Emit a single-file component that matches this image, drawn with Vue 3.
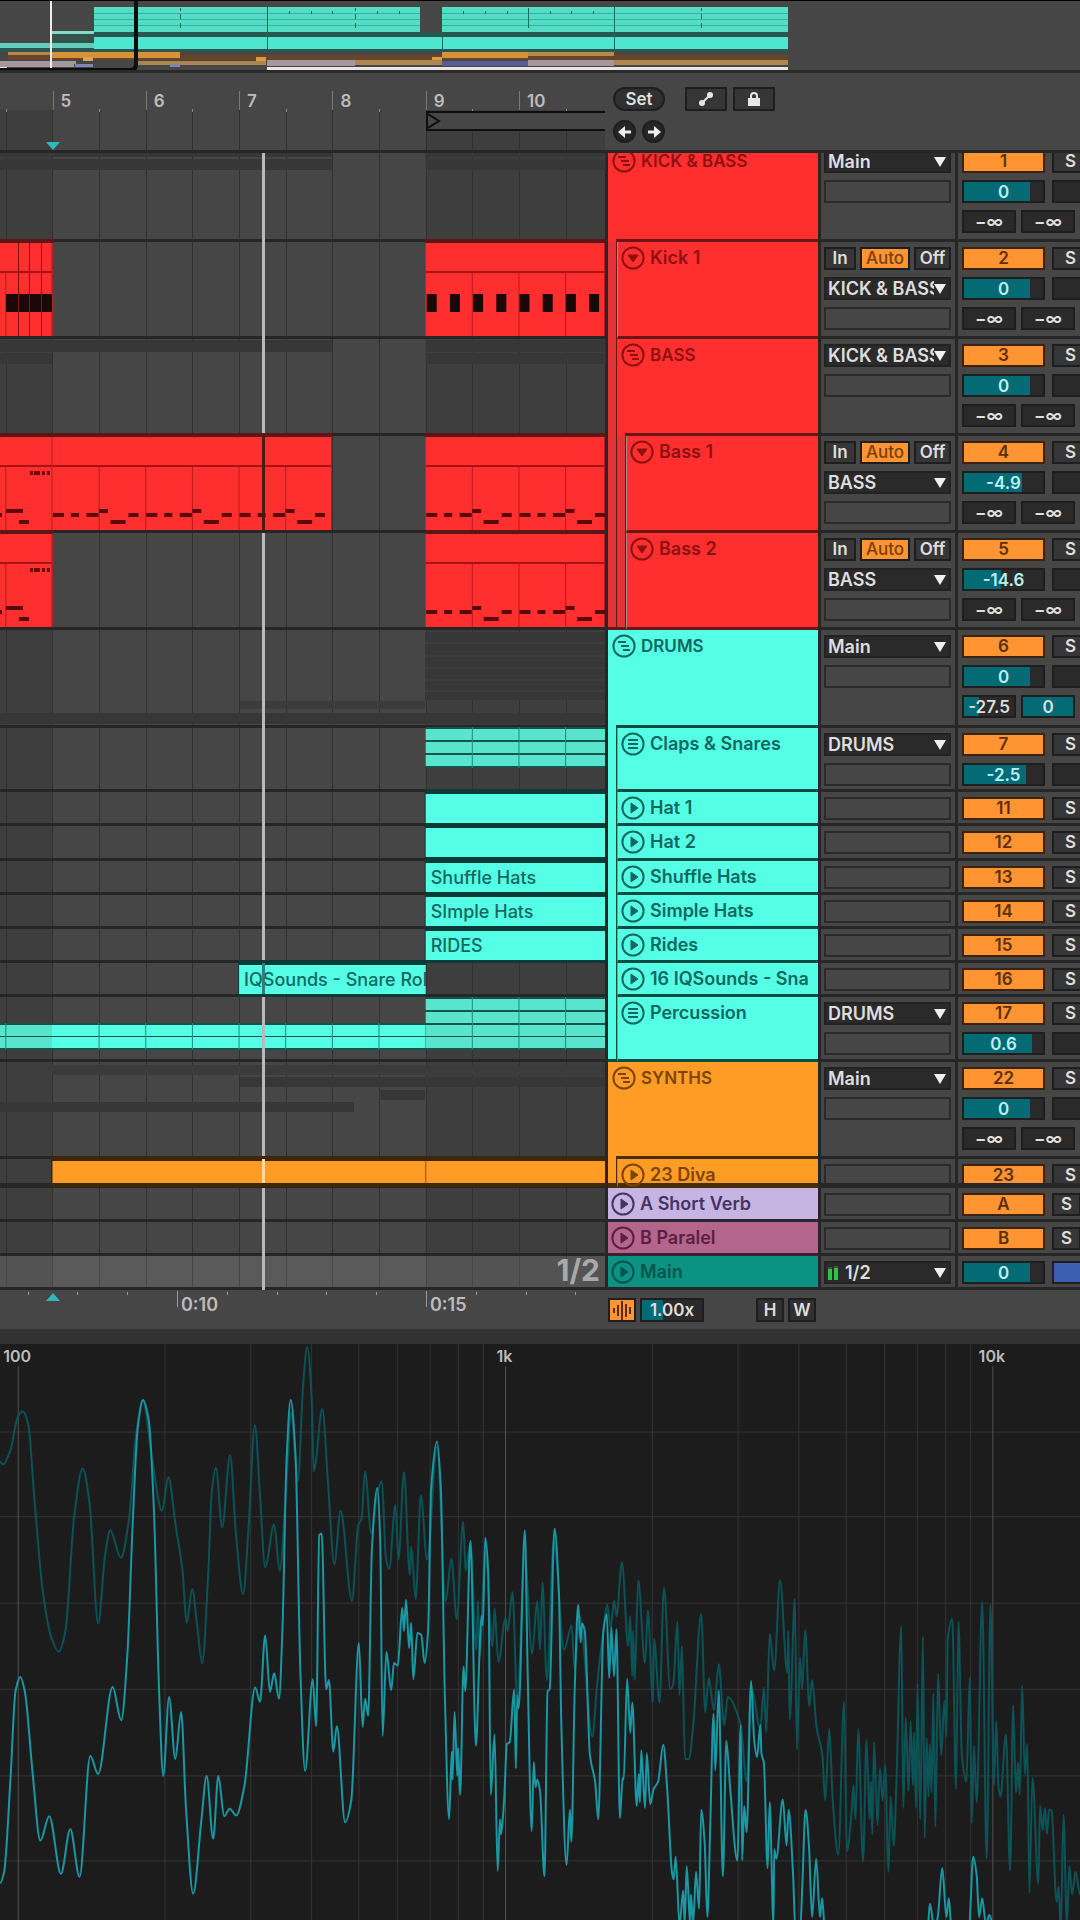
<script setup>
const RED = '#ff2f2f'
const TEAL = '#55ffe6'
const ORANGE = '#ff9c26'
const LANE = 605
const SHADE = '#373737'

// Timeline position in lane units for a given bar number
const barX = (bar) => 52.5 + (bar - 5) * 93.3
const beatLines = Array.from({ length: 13 }, (_, i) => 5.8 + i * 46.65)
const pct = (x) => (x / LANE) * 100 + '%'

const r = (x, y, w, h, fill) => ({ x, y, w, h, fill })
const linesIn = (x0, x1, y, h, fill) =>
  beatLines.filter((b) => b > x0 + 2 && b < x1 - 2).map((b) => r(b - 0.5, y, 1, h, fill))

function redClip(x0, x1) {
  return [
    r(x0 - 1, -3, x1 - x0 + 2, 4, '#5c1616'),
    r(x0, 1, x1 - x0, 93, RED),
    r(x0, 29, x1 - x0, 2, '#a81414'),
    ...linesIn(x0, x1, 31, 63, '#b81c1c'),
    r(x1 - 1, 1, 1, 93, '#b81c1c'),
  ]
}
const bassPattern = [[0.5, 11, 77], [18.5, 8, 77], [34, 12, 77], [46.5, 9, 73], [58, 15, 84], [76, 10, 77]]
function bassNotes(fromBar, toBar, max) {
  const out = []
  for (let b = fromBar; b <= toBar; b++) {
    for (const [dx, w, y] of bassPattern) {
      const x = barX(b) + dx
      if (x < max - 1) out.push(r(x, y, Math.min(w, max - x), 4, '#5a0808'))
    }
  }
  return out
}
const bassTail = [
  r(0, 77, 2, 4, '#5a0808'), r(6, 73, 17, 4, '#5a0808'), r(19, 84, 10, 4, '#5a0808'),
  r(30, 35, 3, 4, '#6a0c0c'), r(34, 35, 6, 4, '#6a0c0c'), r(42, 35, 3, 4, '#6a0c0c'), r(47, 35, 3, 4, '#6a0c0c'),
]
const kickLeft = [
  r(6, 52, 46, 18, '#1c0808'),
  ...[18, 29, 41].flatMap((x) => [r(x, 1, 1, 51, '#7a1010'), r(x, 52, 1, 18, '#8a1616'), r(x, 70, 1, 24, '#7a1010')]),
]
const kickRight = Array.from({ length: 8 }, (_, i) => r(426.7 + i * 23.2, 52, 10, 18, '#1c0808'))

function tealClip(x0, x1) {
  return [r(x0 - 1, -3, x1 - x0 + 1, 37, '#0b3b36'), r(x0, 2, x1 - x0, 29, TEAL)]
}
function tealStack(x0, x1, ys, fill) {
  const top = ys[0] - 2
  const bottom = ys[ys.length - 1] + 13
  return [
    r(x0, top, x1 - x0, bottom - top, '#14544c'),
    ...ys.map((y) => r(x0, y, x1 - x0, 11, fill)),
    ...linesIn(x0, x1, top, bottom - top, '#1f8a7c'),
  ]
}
const drumShade = [
  r(425, 2, 180, 68, SHADE), ...[12, 25, 37, 49, 60].map((y) => r(425, y, 180, 2, '#3c3c3c')),
  r(240, 71, 185, 8, '#3b3b3b'), r(0, 83, 605, 11, SHADE),
]
const X9 = barX(9)

const tracks = [
  { name: 'KICK & BASS', n: 1, h: 97, c: 'red', icon: 'group', own: true, strips: [], out: 'Main', vol: '0', fill: 83, meters: true,
    rects: [r(0, 1, 332, 11, SHADE), r(0, 14, 332, 11, SHADE), r(X9, 1, 180, 11, SHADE), r(X9, 14, 180, 11, SHADE)] },
  { name: 'Kick 1', n: 2, h: 97, c: 'red', icon: 'fold', strips: ['red'], monitor: true, out: 'KICK & BASS', vol: '0', fill: 83, meters: true,
    rects: [...redClip(0, 52.5), ...kickLeft, ...redClip(X9, LANE), ...kickRight] },
  { name: 'BASS', n: 3, h: 97, c: 'red', icon: 'group', own: true, strips: ['red'], out: 'KICK & BASS', vol: '0', fill: 83, meters: true,
    rects: [r(0, 1, 332, 12, SHADE), r(0, 14, 52, 11, SHADE), r(X9, 1, 180, 12, SHADE), r(X9, 14, 180, 11, SHADE)] },
  { name: 'Bass 1', n: 4, h: 97, c: 'red', icon: 'fold', strips: ['red', 'red'], monitor: true, out: 'BASS', vol: '-4.9', fill: 73, meters: true, head: '#4a1a1a',
    rects: [...redClip(0, 52.5), ...bassTail, ...redClip(52.5, 332), ...bassNotes(5, 7, 332), ...redClip(X9, LANE), ...bassNotes(9, 10, LANE)] },
  { name: 'Bass 2', n: 5, h: 97, c: 'red', icon: 'fold', strips: ['red', 'red'], last: true, monitor: true, out: 'BASS', vol: '-14.6', fill: 47, meters: true,
    rects: [...redClip(0, 52.5), ...bassTail, ...redClip(X9, LANE), ...bassNotes(9, 10, LANE)] },
  { name: 'DRUMS', n: 6, h: 98, c: 'teal', icon: 'group', own: true, strips: [], out: 'Main', vol: '0', fill: 83, meters: true, live: true, rects: drumShade },
  { name: 'Claps & Snares', n: 7, h: 64, c: 'teal', icon: 'list', strips: ['teal'], out: 'DRUMS', vol: '-2.5', fill: 78,
    rects: tealStack(X9, LANE, [1, 14, 27], '#58e4cd') },
  { name: 'Hat 1', n: 11, h: 34, c: 'teal', icon: 'play', strips: ['teal'], rects: tealClip(X9, LANE) },
  { name: 'Hat 2', n: 12, h: 35, c: 'teal', icon: 'play', strips: ['teal'], rects: tealClip(X9, LANE) },
  { name: 'Shuffle Hats', n: 13, h: 34, c: 'teal', icon: 'play', strips: ['teal'], rects: tealClip(X9, LANE), clip: 'Shuffle Hats', x0: X9, x1: LANE },
  { name: 'Simple Hats', n: 14, h: 34, c: 'teal', icon: 'play', strips: ['teal'], rects: tealClip(X9, LANE), clip: 'SImple Hats', x0: X9, x1: LANE },
  { name: 'Rides', n: 15, h: 34, c: 'teal', icon: 'play', strips: ['teal'], rects: tealClip(X9, LANE), clip: 'RIDES', x0: X9, x1: LANE },
  { name: '16 IQSounds - Sna', n: 16, h: 34, c: 'teal', icon: 'play', strips: ['teal'], rects: tealClip(barX(7), X9), clip: 'IQSounds - Snare Roll', x0: barX(7), x1: X9, head: '#2f7f76' },
  { name: 'Percussion', n: 17, h: 65, c: 'teal', icon: 'list', strips: ['teal'], last: true, out: 'DRUMS', vol: '0.6', fill: 86,
    rects: [...tealStack(0, 52, [28, 40], '#58e4cd'), ...tealStack(52, X9, [28, 40], TEAL), ...tealStack(X9, LANE, [2, 15, 28, 40], '#58e4cd')] },
  { name: 'SYNTHS', n: 22, h: 97, c: 'orange', icon: 'group', own: true, strips: [], out: 'Main', vol: '0', fill: 83, meters: true,
    rects: [r(52, 3, 553, 10, '#3b3b3b'), r(240, 15, 365, 10, SHADE), r(379, 28, 46, 10, SHADE), r(0, 40, 354, 10, SHADE)] },
  { name: '23 Diva', n: 23, h: 29, c: 'orange', icon: 'play', strips: ['orange'], last: true, cut: true, head: '#ffd9a0',
    rects: [r(51, -3, 554, 31, '#3d270b'), r(52.5, 2, 552.5, 22, ORANGE), r(X9 - 0.5, 2, 1, 22, '#8a5412')] },
]
const returns = [
  { name: 'A Short Verb', n: 'A', h: 34, c: 'lilac', icon: 'play', strips: [], rects: [], narrow: true },
  { name: 'B Paralel', n: 'B', h: 34, c: 'pink', icon: 'play', strips: [], rects: [], narrow: true },
  { name: 'Main', h: 34, c: 'green', icon: 'play', strips: [], main: true, out: '1/2', vol: '0', fill: 83,
    rects: [r(0, 0, 605, 31, 'rgba(255,255,255,0.11)')] },
]
const rows = [...tracks, ...returns]

const field = (fill) => ({ background: `linear-gradient(90deg, #046a74 ${fill}%, #2a2a2a ${fill}%)` })

const bars = [5, 6, 7, 8, 9, 10]
const halfTicks = beatLines.filter((_, i) => i % 2 === 0)
const seconds = Array.from({ length: 12 }, (_, i) => ({ x: 27.6 + i * 49.8, label: { 3: '0:10', 8: '0:15' }[i] }))

const t1 = '#55dcc6'
const overview = [
  r(94, 32, 694, 5, '#26584f'), r(51, 34, 43, 9, '#33524c'), r(0, 48, 788, 4, '#2c564f'),
  r(94, 7, 326, 25, t1), r(442, 7, 346, 25, t1), r(51, 31, 43, 3, '#86d8c8'), r(0, 43, 94, 5, '#62ceba'), r(94, 37, 694, 12, '#4fe6d0'),
  ...[13, 19, 25].flatMap((y) => [r(94, y, 326, 1, '#35b3a1'), r(442, y, 346, 1, '#35b3a1')]),
  ...[180, 355, 701].flatMap((x) => [r(x, 8, 1, 3, '#1b6a60'), r(x, 14, 1, 5, '#1b6a60'), r(x, 23, 1, 5, '#1b6a60')]),
  ...[267, 614].map((x) => r(x, 7, 1, 43, '#1b6a60')), r(528, 8, 1, 20, '#1b6a60'), r(442, 37, 1, 12, '#1b6a60'),
  ...[289, 311, 332, 377, 399, 463, 485, 507, 550, 571, 593].map((x) => r(x, 11, 1, 3, '#1b6a60')),
  r(8, 55, 780, 5, '#66452a'), r(8, 52, 172, 3, '#b9894c'), r(51, 52, 129, 6, '#d79237'), r(83, 57, 10, 4, '#dba35a'),
  r(256, 57, 10, 5, '#e09a3c'), r(432, 57, 10, 5, '#e09a3c'), r(442, 52, 86, 6, '#d79237'), r(528, 52, 86, 4, '#b9894c'),
  r(0, 61, 76, 3, '#a5979e'), r(0, 64, 74, 3, '#a5979e'), r(75, 64, 18, 3, '#8284b4'), r(138, 61, 128, 4, '#ac8650'), r(170, 64, 10, 3, '#8284b4'),
  r(267, 60, 88, 6, '#a5979e'), r(355, 60, 87, 5, '#ac8650'), r(442, 61, 86, 5, '#555c98'), r(528, 60, 86, 6, '#a5979e'), r(614, 60, 174, 5, '#ac8650'),
  r(0, 67, 7, 3, '#e8e4e4'), r(267, 67, 521, 3, '#e8e4e4'),
]

// Spectrum: frequency decades on x, level on y, in plot units
const decade = 1415
const freqLines = []
for (let d = 0; d < 3; d++) {
  for (let n = 1; n < 10; n++) freqLines.push({ x: 53 + (d + Math.log10(n)) * decade, major: n === 1 })
}
const levelLines = [271, 496, 726, 955, 1185, 1411]

// Monotone cubic curve through the sampled points
function curve(flat) {
  const p = []
  for (let i = 0; i < flat.length; i += 2) p.push([flat[i], flat[i + 1]])
  const s = p.slice(1).map((q, i) => (q[1] - p[i][1]) / (q[0] - p[i][0]))
  const m = p.map((_, i) => {
    if (i === 0 || i === p.length - 1) return 0
    return s[i - 1] * s[i] <= 0 ? 0 : (2 * s[i - 1] * s[i]) / (s[i - 1] + s[i])
  })
  let d = `M${p[0][0]},${p[0][1]}`
  for (let i = 0; i < p.length - 1; i++) {
    const k = (p[i + 1][0] - p[i][0]) / 3
    d += `C${p[i][0] + k},${p[i][1] + m[i] * k} ${p[i + 1][0] - k},${p[i + 1][1] - m[i + 1] * k} ${p[i + 1][0]},${p[i + 1][1]}`
  }
  return d
}
const upper = (a) => a.map((v, i) => (i % 2 ? v : v + 1568))

const liveCurve = curve([
  0, 1470, 12, 1440, 30, 1200, 45, 960, 59, 922, 72, 960, 95, 1180, 117, 1357, 143, 1292, 177, 1445, 204, 1327, 231, 1453, 262, 1132, 285, 1180,
  327, 949, 352, 1037, 370, 860, 385, 520, 400, 260, 415, 186, 432, 240, 447, 480, 462, 960, 474, 1185, 491, 975, 509, 1140, 526, 1015, 540, 1270,
  561, 1498, 585, 1300, 600, 1185, 619, 1352, 634, 1185, 651, 1292, 667, 1272, 686, 1290, 710, 1210, 741, 950, 755, 988, 770, 812, 784, 962,
  796, 912, 810, 980, 820, 800, 832, 350, 844, 186, 858, 330, 872, 900, 886, 1172, 908, 928, 918, 1053, 927, 545, 934, 541, 947, 955, 955, 930,
  968, 1120, 978, 1053, 1002, 1308, 1020, 1250, 1042, 832, 1053, 1055, 1060, 980, 1069, 1025, 1080, 580, 1096, 420, 1104, 560, 1111, 1078,
  1122, 855, 1136, 957, 1144, 885, 1155, 892, 1168, 738, 1173, 800, 1179, 717, 1188, 845, 1194, 778, 1200, 928, 1212, 805, 1223, 810, 1233, 885,
  1243, 800, 1252, 420, 1269, 296, 1280, 420, 1292, 980, 1304, 1300, 1312, 1120, 1314, 1195, 1320, 1015, 1328, 1185, 1330, 1110, 1336, 1235,
  1346, 895, 1351, 960, 1366, 560, 1382, 1105, 1392, 870, 1398, 760, 1402, 785, 1409, 552, 1418, 650, 1425, 1235, 1436, 1075, 1445, 1437,
  1452, 1300, 1455, 1340, 1464, 1245, 1472, 1100, 1480, 1095, 1493, 955, 1498, 1165, 1502, 970, 1506, 1005, 1524, 532, 1532, 900, 1544, 1332,
  1550, 1148, 1555, 1215, 1560, 1195,
  ...upper([
    0, 1225, 13, 1452, 22, 960, 28, 955, 42, 528, 55, 700, 62, 1050, 77, 1422, 87, 1275, 91, 1360, 101, 950, 111, 730, 118, 830, 122, 780, 130, 800,
    145, 1130, 160, 1200, 169, 1300, 184, 800, 194, 755, 201, 925, 207, 790, 215, 920, 222, 795, 232, 1297, 240, 1190, 243, 1195, 253, 927,
    262, 1070, 268, 990, 281, 1265, 287, 1180, 290, 1255, 294, 1117, 305, 1270, 310, 1125, 320, 1260, 330, 1220, 343, 1200, 358, 1102, 370, 1230,
    383, 1440, 388, 1460, 394, 1400, 405, 1580, 416, 1490, 420, 1580, 426, 1425, 436, 1580, 438, 1500, 445, 1575, 453, 1440, 462, 1538, 468, 1275,
    478, 1360, 486, 1560, 494, 1330, 504, 1020, 509, 1170, 519, 957, 531, 1452, 541, 1092, 552, 1215, 573, 1410, 583, 1050, 587, 1410, 593, 1265,
    600, 1335, 613, 933, 622, 1090, 630, 1135, 640, 1050, 643, 1125, 650, 1150, 661, 1430, 667, 1255, 678, 1580, 680, 1380, 686, 1405, 705, 1248,
    716, 1370, 722, 1275, 735, 1450, 742, 1600, 755, 1600, 762, 1470, 771, 1275, 781, 1370, 790, 1560, 802, 1405, 813, 1560, 819, 1510, 828, 1600,
    1125, 1600, 1132, 1525, 1145, 1590, 1155, 1560, 1168, 1430, 1180, 1560, 1187, 1510, 1195, 1590, 1245, 1600, 1258, 1400, 1268, 1450, 1275, 1560,
    1284, 1510, 1295, 1580, 1305, 1555, 1320, 1600,
  ]),
])
const peakCurve = curve([
  0, 350, 9, 357, 30, 320, 52, 230, 66, 216, 82, 250, 100, 450, 125, 700, 150, 820, 171, 855, 190, 800, 215, 500, 240, 368, 260, 460, 285, 780,
  305, 600, 320, 532, 351, 605, 375, 500, 395, 280, 415, 190, 440, 330, 470, 480, 489, 392, 510, 520, 530, 640, 542, 778, 558, 688, 573, 790,
  587, 885, 605, 640, 615, 430, 627, 366, 645, 524, 668, 333, 685, 540, 706, 702, 722, 520, 740, 252, 755, 440, 770, 630, 796, 516, 812, 640,
  832, 400, 845, 220, 865, 400, 880, 150, 892, 45, 905, 180, 911, 375, 936, 210, 952, 400, 971, 622, 989, 480, 1022, 720, 1040, 520, 1050, 500,
  1060, 376, 1078, 540, 1096, 430, 1109, 402, 1120, 600, 1130, 635, 1148, 465, 1157, 610, 1173, 378, 1190, 650, 1194, 575, 1207, 715, 1222, 440,
  1240, 610, 1269, 310, 1294, 720, 1311, 608, 1326, 768, 1345, 510, 1352, 640, 1366, 565, 1383, 850, 1388, 720, 1392, 870, 1409, 590, 1430, 840,
  1436, 740, 1447, 882, 1468, 765, 1474, 800, 1488, 697, 1502, 980, 1524, 600, 1545, 860, 1560, 720,
  ...upper([
    0, 850, 7, 670, 20, 930, 40, 560, 70, 850, 92, 785, 100, 900, 115, 760, 152, 1080, 165, 950, 184, 800, 195, 730, 205, 790, 215, 720, 222, 760,
    238, 618, 256, 840, 262, 760, 268, 920, 270, 800, 275, 930, 285, 665, 305, 885, 313, 745, 328, 990, 331, 820, 347, 990, 360, 685, 378, 955,
    387, 940, 399, 775, 405, 970, 412, 840, 421, 1140, 432, 1140, 445, 1050, 468, 755, 480, 1015, 490, 925, 505, 1010, 519, 888, 535, 1050,
    545, 975, 583, 1050, 600, 1200, 613, 950, 640, 1060, 650, 950, 657, 1070, 667, 808, 680, 905, 697, 665, 718, 910, 721, 800, 725, 1035,
    740, 715, 746, 1115, 755, 870, 761, 955, 770, 797, 782, 1000, 790, 930, 803, 1055, 820, 1130, 828, 1250, 840, 1060, 850, 1250, 866, 1395,
    883, 988, 891, 1385, 905, 1280, 910, 1210, 916, 1300, 924, 1060, 938, 1412, 948, 1090, 957, 1300, 961, 1200, 965, 1340, 970, 1095, 980, 1315,
    987, 1165, 995, 1250, 1002, 1155, 1012, 1440, 1018, 1240, 1027, 1370, 1035, 1200, 1049, 788, 1055, 1270, 1062, 1030, 1070, 1225, 1076, 1040,
    1083, 1210, 1086, 1070, 1092, 1270, 1096, 940, 1104, 1300, 1112, 815, 1117, 1350, 1123, 1085, 1128, 1240, 1132, 1100, 1137, 1230, 1142, 965,
    1148, 1320, 1156, 912, 1165, 1130, 1174, 985, 1180, 1080, 1184, 820, 1197, 768, 1208, 1220, 1215, 775, 1225, 1130, 1238, 1200, 1248, 925,
    1254, 1310, 1260, 1105, 1268, 1255, 1284, 722, 1297, 1405, 1308, 730, 1318, 1210, 1325, 1040, 1331, 1210, 1337, 1240, 1353, 1075, 1365, 1437,
    1374, 997, 1382, 1230, 1388, 1150, 1393, 1235, 1400, 945, 1408, 1180, 1415, 1100, 1421, 1495, 1430, 1190, 1447, 1472, 1452, 1265, 1460, 1330,
    1466, 1270, 1472, 1340, 1478, 1275, 1485, 1275, 1500, 1520, 1506, 1480, 1512, 1600, 1520, 1288, 1530, 1580, 1537, 1425, 1545, 1500,
    1555, 1440, 1568, 1500,
  ]),
])
</script>

<template>
  <main class="app">
    <svg class="overview" viewBox="0 0 1080 70" preserveAspectRatio="none" role="img" aria-label="Arrangement overview">
      <rect v-for="(s, i) in overview" :key="i" :x="s.x" :y="s.y" :width="s.w" :height="s.h" :fill="s.fill" />
      <rect x="50" y="1" width="2" height="69" fill="#ececec" />
      <path d="M0 70H130Q136 70 136 64V0" fill="none" stroke="#0c0c0c" stroke-width="4" />
      <rect x="0" y="0" width="1080" height="1" fill="#000" />
    </svg>

    <header class="top">
      <div class="ruler">
        <span class="dim before"></span><span class="dim after"></span>
        <span v-for="(x, i) in beatLines" :key="'l' + i" class="beat" :style="{ left: pct(x) }"></span>
        <span v-for="(x, i) in halfTicks" :key="'h' + i" class="half" :style="{ left: pct(x) }"></span>
        <span v-for="b in bars" :key="b" class="bar" :style="{ left: pct(barX(b)) }">{{ b }}</span>
        <span class="loop"><svg width="16" height="16" viewBox="0 0 16 16"><path d="M0 1L11 8L0 15" fill="none" stroke="#0e0e0e" stroke-width="2" /></svg></span>
        <svg class="marker" width="14" height="8" viewBox="0 0 14 8"><path d="M0 0H14L7 8Z" fill="#2fb9bd" /></svg>
      </div>
      <div class="tools">
        <div class="tool-row">
          <button class="pill">Set</button>
          <button class="square first" aria-label="Automation mode">
            <svg width="16" height="16" viewBox="0 0 16 16"><path d="M4 12L12 4" stroke="#e6e6e6" stroke-width="2" /><circle cx="4" cy="12" r="3" fill="#e6e6e6" /><circle cx="12" cy="4" r="3" fill="#e6e6e6" /></svg>
          </button>
          <button class="square" aria-label="Lock envelopes">
            <svg width="16" height="16" viewBox="0 0 16 16"><rect x="2" y="7" width="12" height="8" fill="#e6e6e6" /><path d="M5 8V5a3 3 0 0 1 6 0V8" fill="none" stroke="#e6e6e6" stroke-width="2" /></svg>
          </button>
        </div>
        <div class="tool-row arrows">
          <button class="round" aria-label="Previous locator">
            <svg width="16" height="16" viewBox="0 0 16 16"><path d="M14 8H5" stroke="#eee" stroke-width="3" /><path d="M1 8L8 2V14Z" fill="#eee" /></svg>
          </button>
          <button class="round" aria-label="Next locator">
            <svg width="16" height="16" viewBox="0 0 16 16"><path d="M2 8H11" stroke="#eee" stroke-width="3" /><path d="M15 8L8 2V14Z" fill="#eee" /></svg>
          </button>
        </div>
      </div>
    </header>

    <section class="tracks">
      <div class="grid">
        <span class="dim before"></span><span class="dim after"></span>
        <span v-for="(x, i) in beatLines" :key="i" class="beat" :style="{ left: pct(x) }"></span>
      </div>
      <div v-for="t in rows" :key="t.name" class="track" :class="[t.c, { cut: t.cut }]" :style="{ height: t.h + 'px' }">
        <div class="lane">
          <svg :viewBox="`0 0 605 ${t.h - 3}`" :style="{ height: t.h - 3 + 'px' }" preserveAspectRatio="none">
            <rect v-for="(s, i) in t.rects" :key="i" :x="s.x" :y="s.y" :width="s.w" :height="s.h" :fill="s.fill" />
          </svg>
          <span v-if="t.clip" class="clip-name" :style="{ left: pct(t.x0), width: pct(t.x1 - t.x0) }">{{ t.clip }}</span>
          <span v-if="t.main" class="signature">1/2</span>
          <span class="playhead" :class="{ over: t.head }" :style="{ background: t.head }"></span>
        </div>

        <div class="head">
          <span v-for="(s, i) in t.strips" :key="i" class="strip" :class="[s, { dimmed: s === 'red', end: t.last }]"></span>
          <span v-if="t.own" class="strip own"></span>
          <div class="title" :class="{ own: t.own, nested: t.strips.length }">
            <svg class="icon" width="24" height="24" viewBox="0 0 24 24" fill="none" stroke="currentColor" stroke-width="2">
              <circle cx="12" cy="12" r="10.6" />
              <path v-if="t.icon === 'group'" d="M6 8H14M9 12H17M11 16H18" />
              <path v-else-if="t.icon === 'list'" d="M7 8H17M7 12H17M7 16H17" />
              <path v-else-if="t.icon === 'play'" d="M10 7V17L17 12Z" fill="currentColor" stroke-width="1" />
              <path v-else d="M7 9H17L12 16Z" fill="currentColor" stroke-width="1" />
            </svg>
            <span class="name">{{ t.name }}</span>
          </div>
        </div>

        <div class="io">
          <div v-if="t.monitor" class="monitor">
            <button class="in">In</button><button class="auto">Auto</button><button class="off">Off</button>
          </div>
          <label v-if="t.out" class="pick">
            <svg v-if="t.main" class="levels" width="11" height="14" viewBox="0 0 11 14"><path d="M0 3H4V14H0ZM6 1H10V14H6Z" fill="#2ec24a" /><path d="M0 1H4V3H0ZM6 0H10V2H6Z" fill="#3b5a20" /></svg>
            <select :aria-label="t.name + ' output'"><option>{{ t.out }}</option></select>
            <svg class="caret" width="12" height="10" viewBox="0 0 12 10"><path d="M0 0H12L6 10Z" fill="#f0f0f0" /></svg>
          </label>
          <span v-if="!t.main" class="slot"></span>
        </div>

        <div class="mixer">
          <div v-if="t.n" class="mix-row">
            <button class="active">{{ t.n }}</button>
            <button class="solo" :class="{ narrow: t.narrow }">S</button>
          </div>
          <div v-if="t.vol" class="mix-row">
            <input class="volume" :value="t.vol" :style="field(t.fill)" :aria-label="t.name + ' volume'" />
            <span class="pan" :class="{ cue: t.main }"></span>
          </div>
          <div v-if="t.meters" class="mix-row sends">
            <input :value="t.live ? '-27.5' : '−∞'" :style="field(t.live ? 30 : 0)" :aria-label="t.name + ' send A'" />
            <input :value="t.live ? '0' : '−∞'" :style="field(t.live ? 100 : 0)" :aria-label="t.name + ' send B'" />
          </div>
        </div>
      </div>
    </section>

    <footer class="status">
      <div class="clock">
        <span v-for="(s, i) in seconds" :key="i" class="sec" :class="{ big: s.label }" :style="{ left: pct(s.x) }">{{ s.label }}</span>
        <svg class="marker" width="14" height="8" viewBox="0 0 14 8"><path d="M0 8H14L7 0Z" fill="#2fb9bd" /></svg>
      </div>
      <div class="zoom">
        <button class="wave" aria-label="Scrub audio">
          <svg width="21" height="19" viewBox="0 0 21 19"><path d="M2 7V12M6 4V15M10 0V19M14 3V16M18 6V13" stroke="#5c2f0c" stroke-width="2" /></svg>
        </button>
        <input class="speed" value="1.00x" aria-label="Speed" />
        <button class="fit h">H</button><button class="fit">W</button>
      </div>
    </footer>

    <section class="spectrum">
      <svg viewBox="0 37 3136 1531" preserveAspectRatio="none" role="img" aria-label="Spectrum analyser">
        <g fill="none">
          <path v-for="(y, i) in levelLines" :key="'y' + i" class="line" :d="`M0 ${y}H3136`" />
          <path v-for="(l, i) in freqLines" :key="'x' + i" class="line" :class="{ major: l.major }" :d="`M${l.x} ${l.major ? 96 : 37}V1568`" />
          <path class="peak" :d="peakCurve" />
          <path class="live" :d="liveCurve" />
        </g>
      </svg>
      <span v-for="(f, i) in ['100', '1k', '10k']" :key="f" class="freq" :style="{ left: ((50 + i * decade) / 3136) * 100 + '%' }">{{ f }}</span>
    </section>
  </main>
</template>

<style>
body {
  margin: 0;
  background: #464646;
}
</style>

<style scoped>
.app {
  --side: 475px;
  --line: #262626;
  display: flex;
  flex-direction: column;
  min-height: 100vh;
  overflow: hidden;
  background: #464646;
  color: #dedede;
  font-family: Inter, "Liberation Sans", sans-serif;
  font-size: 17px;
  font-weight: 600;
  line-height: 20px;
}
.app * {
  box-sizing: border-box;
}
button,
input,
select {
  margin: 0;
  padding: 0;
  border: 2px solid #1e1e1e;
  border-radius: 0;
  background: #363636;
  color: #dedede;
  font: inherit;
  text-align: center;
}
svg {
  display: block;
}
.overview {
  width: 100%;
  height: 70px;
  flex: none;
  overflow: visible;
}

.top {
  display: flex;
  height: 83px;
  border-top: 3px solid #2a2a2a;
  border-bottom: 3px solid var(--line);
}
.ruler {
  position: relative;
  flex: 1;
  min-width: 0;
  overflow: hidden;
}
.ruler .dim,
.ruler .beat {
  top: 37px;
}
.dim {
  position: absolute;
  top: 0;
  bottom: 0;
  background: #3e3e3e;
}
.dim.before {
  left: 0;
  width: 8.68%;
}
.dim.after {
  left: 70.35%;
  right: 0;
}
.beat {
  position: absolute;
  top: 0;
  bottom: 0;
  width: 1px;
  background: #303030;
}
.half {
  position: absolute;
  top: 36px;
  width: 1px;
  height: 3px;
  background: #8a8a8a;
}
.bar {
  position: absolute;
  top: 18px;
  height: 19px;
  padding-left: 7px;
  border-left: 1px solid #7a7a7a;
  color: #bdbdbd;
}
.loop {
  position: absolute;
  left: 70.35%;
  right: 0;
  top: 38px;
  height: 20px;
  border: 2px solid #0e0e0e;
  border-right: 0;
  background: #464646;
}
.marker {
  position: absolute;
  left: 8.76%;
  margin-left: -7px;
}
.ruler .marker {
  bottom: 0;
}
.tools {
  width: var(--side);
  padding: 14px 0 0 8px;
}
.tool-row {
  display: flex;
  gap: 6px;
}
.tool-row.arrows {
  margin-top: 9px;
}
.pill {
  width: 52px;
  height: 24px;
  border-radius: 12px;
  background: #303030;
}
.square,
.round {
  display: grid;
  place-items: center;
  width: 42px;
  height: 24px;
}
.square.first {
  margin-left: 14px;
}
.round {
  width: 23px;
  height: 23px;
  border-radius: 50%;
  background: #262626;
}

.tracks {
  position: relative;
  overflow: hidden;
}
.grid {
  position: absolute;
  top: 0;
  bottom: 0;
  left: 0;
  right: var(--side);
}
.track {
  position: relative;
  display: flex;
}
.track:nth-child(2) {
  margin-top: -8px;
}
.lane {
  position: relative;
  flex: 1;
  min-width: 0;
  border-bottom: 3px solid var(--line);
}
.lane svg {
  width: 100%;
  overflow: visible;
}
.clip-name {
  position: absolute;
  top: 0;
  height: 31px;
  padding-left: 5px;
  overflow: hidden;
  color: #12685e;
  font-size: 18px;
  font-weight: 500;
  line-height: 33px;
  white-space: nowrap;
}
.signature {
  position: absolute;
  right: 5px;
  top: 0;
  color: #a9a9a9;
  font-size: 30px;
  font-weight: 700;
  line-height: 29px;
}
.playhead {
  position: absolute;
  top: 0;
  bottom: -3px;
  left: 43.3%;
  width: 3px;
  background: #b9b9b9;
}
.playhead.over {
  bottom: 0;
}

.head {
  display: flex;
  width: 216px;
  border-left: 3px solid var(--line);
  border-right: 3px solid var(--line);
}
.red {
  --fill: #ff2f2f;
  --ink: #8e1010;
  --edge: #6a1616;
}
.teal {
  --fill: #55ffe6;
  --ink: #12685e;
  --edge: #0b4b44;
}
.orange {
  --fill: #ff9c26;
  --ink: #7c4508;
  --edge: #4a2d08;
}
.lilac {
  --fill: #c6b4e2;
  --ink: #453463;
  --edge: #2c2535;
}
.pink {
  --fill: #b4658c;
  --ink: #5a1f42;
  --edge: #3a2230;
}
.green {
  --fill: #0b9282;
  --ink: #05554c;
  --edge: #262626;
}
.strip {
  width: 9px;
  border-right: 1px solid var(--edge);
  background: var(--fill);
}
.strip.dimmed {
  background: #e23434;
}
.strip.own {
  width: 8px;
  border-right: 0;
}
.strip.end {
  border-bottom: 3px solid var(--edge);
}
.title {
  display: flex;
  flex: 1;
  min-width: 0;
  gap: 5px;
  padding: 4px 0 0 3px;
  border-bottom: 3px solid var(--edge);
  background: var(--fill);
  color: var(--ink);
}
.title.nested {
  border-left: 1px solid #9a8f8c;
}
.title.own {
  padding-left: 0;
  font-size: 17px;
}
.title.own .icon {
  margin-left: -4px;
}
.title.own.nested {
  border-left: 0;
}
.icon {
  flex: none;
}
.name {
  overflow: hidden;
  font-size: 18px;
  line-height: 24px;
  white-space: nowrap;
}
.own .name {
  font-size: 17px;
}

.io,
.mixer {
  display: flex;
  flex-direction: column;
  gap: 7px;
  overflow: hidden;
  border-bottom: 3px solid var(--line);
}
.io {
  width: 137px;
  padding: 5px 4px 0 3px;
  border-right: 3px solid var(--line);
}
.mixer {
  width: 122px;
  padding: 5px 0 0 4px;
}
.cut .title,
.cut .lane,
.cut .io,
.cut .mixer,
.cut .strip {
  border-bottom-width: 5px;
}
.monitor {
  display: flex;
  flex: none;
  gap: 4px;
}
.monitor button {
  height: 23px;
  line-height: 19px;
}
.in {
  width: 32px;
}
.monitor .auto {
  width: 50px;
  background: #ff9433;
  color: #7a3f08;
  font-weight: 500;
}
.off {
  width: 37px;
}
.pick {
  display: flex;
  flex: none;
  align-items: center;
  height: 23px;
  padding-right: 3px;
  background: #2a2a2a;
  border: 2px solid #222;
}
.pick select {
  flex: 1;
  min-width: 0;
  height: 19px;
  padding-left: 2px;
  border: 0;
  background: none;
  appearance: none;
  font-size: 18px;
  line-height: 19px;
  text-align: left;
  overflow: hidden;
  text-overflow: clip;
}
.levels {
  flex: none;
  margin: 0 4px 0 2px;
}
.caret {
  flex: none;
}
.slot {
  flex: none;
  height: 23px;
  border: 2px solid #2a2a2a;
}
.mix-row {
  display: flex;
  flex: none;
  gap: 7px;
}
.mix-row > * {
  flex: none;
  height: 23px;
  line-height: 19px;
}
.active {
  width: 83px;
  border-color: #3a2410;
  background: #ff9433;
  color: #5c2f0c;
}
.solo {
  width: 37px;
}
.solo.narrow {
  width: 29px;
}
.volume {
  width: 83px;
  color: #b9f0f2;
}
.pan {
  width: 60px;
  border: 2px solid #1e1e1e;
  background: #2a2a2a;
}
.pan.cue {
  background: #3a5fb0;
}
.sends {
  gap: 5px;
}
.sends input {
  width: 54px;
}

.status {
  display: flex;
  height: 54px;
  border-bottom: 15px solid #323232;
}
.clock {
  position: relative;
  flex: 1;
  min-width: 0;
}
.clock .marker {
  top: 3px;
}
.sec {
  position: absolute;
  top: 2px;
  height: 3px;
  padding-left: 3px;
  border-left: 1px solid #9a9a9a;
  color: #bdbdbd;
  font-size: 18px;
  line-height: 28px;
}
.sec.big {
  top: 1px;
  height: 16px;
}
.zoom {
  display: flex;
  gap: 4px;
  width: var(--side);
  padding: 8px 0 0 3px;
}
.zoom > * {
  height: 24px;
}
.wave {
  display: grid;
  place-items: center;
  width: 28px;
  background: #ff9433;
}
.speed {
  width: 64px;
  background: linear-gradient(90deg, #046a74 35%, #2a2a2a 35%);
}
.fit {
  width: 28px;
  background: #303030;
}
.fit.h {
  margin-left: 48px;
}

.spectrum {
  position: relative;
  flex: 1;
  min-height: 576px;
  overflow: hidden;
  background: #1c1c1c;
}
.spectrum svg {
  position: absolute;
  width: 100%;
  height: 100%;
}
.spectrum path {
  vector-effect: non-scaling-stroke;
}
.line {
  stroke: #343434;
  stroke-width: 1px;
}
.line.major {
  stroke: #505050;
}
.peak {
  stroke: #0b5357;
  stroke-width: 2px;
}
.live {
  stroke: #1a98a4;
  stroke-width: 2px;
}
.freq {
  position: absolute;
  top: 2px;
  color: #bdbdbd;
  font-size: 16px;
  transform: translateX(-50%);
}
</style>
